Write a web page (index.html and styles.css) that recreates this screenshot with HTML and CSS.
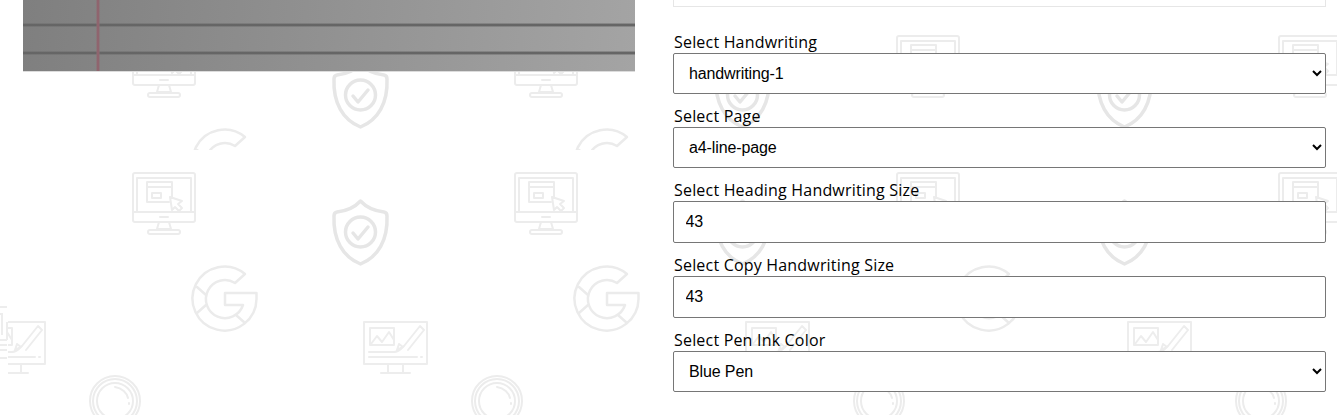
FILE: index.html
```html
<!DOCTYPE html>
<html lang="en">
<head>
  <meta charset="UTF-8">
  <meta name="viewport" content="width=device-width, initial-scale=1.0">
  <title>Handwriting Generator</title>
  <link rel="stylesheet" href="styles.css">
</head>
<body>
  <!-- icon wallpaper behind the page -->
  <svg class="bg-pattern" width="1337" height="415" aria-hidden="true">
    <defs>
      <g id="icons" fill="none" stroke-linejoin="round" stroke-linecap="round">
        <!-- monitor with cursor -->
        <g stroke="#ececec" stroke-width="2">
          <rect x="133" y="173" width="62" height="49" rx="2"/>
          <path d="M137 212V178H191V212M133 212H195M160 217H168M159 222L157 229H171L169 222"/>
          <rect x="148" y="230" width="32" height="4" rx="2"/>
          <path d="M172 198V182H147V202H169M147 187H172"/>
          <rect x="152" y="193" width="9" height="5"/>
          <path d="M170 197L182 201L178 204L182 208L179 211L175 207L172 210Z"/>
        </g>
        <!-- google G -->
        <g stroke="#ebebeb" stroke-width="2.500">
          <path d="M245 274A32 32 0 1 0 256.500 299V293H225V305H243A19 19 0 1 1 235 283Z"/>
          <path d="M197 287L206 295M197 313L206 305M236 315L245 323"/>
        </g>
        <!-- shield with check -->
        <g stroke="#e6e6e6" stroke-width="3.500">
          <path d="M360.5 201C366 207 375 211 384 212Q387 212.500 387 216C388 240 378 257 360.500 264C343 257 333 240 334 216Q334 212.500 337 212C346 211 355 207 360.500 201Z"/>
          <circle cx="360.500" cy="232" r="15"/>
          <path d="M353 233L358 239L368 227"/>
        </g>
        <!-- monitor with pen -->
        <g stroke="#ededed" stroke-width="2">
          <path d="M364 322H427V364H364ZM388 365V372M403 365V372M381 373H410"/>
          <path d="M370 328H394V345H370ZM371 344L377 336L382 342L389 332L394 340"/>
          <path d="M369 352H394C399 352 401 349 404 346L420 326L424 330L408 350M397 350L399 344L403 347Z"/>
          <path d="M369 357H417M421 357H422"/>
        </g>
        <!-- lens ring -->
        <g stroke="#ececec" stroke-width="2">
          <circle cx="115" cy="401" r="25"/>
          <circle cx="115" cy="401" r="22"/>
          <circle cx="115" cy="401" r="18"/>
          <path d="M115 387C122 388 127 393 128 398M129 403V404"/>
        </g>
      </g>
      <pattern id="tile" patternUnits="userSpaceOnUse" x="60" y="0" width="382" height="500">
        <use href="#icons" x="-60"/>
      </pattern>
      <pattern id="tile-top" patternUnits="userSpaceOnUse" x="60" y="-137" width="382" height="500">
        <use href="#icons" x="-60"/>
      </pattern>
    </defs>
    <rect x="0" y="0" width="1337" height="150" fill="url(#tile-top)"/>
    <rect x="0" y="150" width="1337" height="265" fill="url(#tile)"/>
    <rect x="0" y="0" width="8" height="415" fill="#fff"/>
    <path d="M0 307H7M0 314H2V335M7 322V340M0 340H7M0 345H7M0 350H7M0 358H7" fill="none" stroke="#ededed" stroke-width="2"/>
  </svg>

  <main class="layout">
    <section class="preview">
      <div class="paper"></div>
    </section>

    <section class="controls">
      <div class="output-box"></div>

      <form class="settings">
        <div class="field">
          <label for="handwriting">Select Handwriting</label>
          <select id="handwriting">
            <option>handwriting-1</option>
          </select>
        </div>
        <div class="field">
          <label for="page">Select Page</label>
          <select id="page">
            <option>a4-line-page</option>
          </select>
        </div>
        <div class="field">
          <label for="heading-size">Select Heading Handwriting Size</label>
          <input id="heading-size" type="text" value="43">
        </div>
        <div class="field">
          <label for="copy-size">Select Copy Handwriting Size</label>
          <input id="copy-size" type="text" value="43">
        </div>
        <div class="field">
          <label for="ink">Select Pen Ink Color</label>
          <select id="ink">
            <option>Blue Pen</option>
          </select>
        </div>
      </form>
    </section>
  </main>
</body>
</html>
```

FILE: styles.css
```css
html, body {
  height: 415px;
  overflow: hidden;
}
body {
  position: relative;
  margin: 0;
  background-color: #fff;
  font-family: "Liberation Sans", Arial, sans-serif;
}
.bg-pattern {
  position: absolute;
  top: 0;
  left: 0;
  display: block;
  filter: blur(0.5px);
}
.layout {
  position: relative;
  display: flex;
  padding-left: 23px;
}
.preview {
  width: 612px;
  margin-right: 38px;
}
.paper {
  height: 72px;
  background-color: #919191;
  background-image:
    linear-gradient(to right, transparent 73px, #8f6a72 74px, #8f5f6a 75px, #8f6a72 76px, transparent 77px),
    linear-gradient(to bottom, transparent 23px, #6c6c6c 24px, #5f5f5f 25px, #6c6c6c 26px, transparent 27px, transparent 51px, #6c6c6c 52px, #5f5f5f 53px, #6c6c6c 54px, transparent 55px),
    linear-gradient(95deg, #7f7f7f, #a4a4a4);
  border-bottom: 1px solid #dcdcdc;
  box-sizing: border-box;
}
.controls {
  width: 653px;
}
.output-box {
  height: 7px;
  box-sizing: border-box;
  background-color: #fff;
  border: 1px solid #e6e6e6;
  border-top: 0;
}
.settings {
  display: flex;
  flex-direction: column;
  gap: 9px;
  margin-top: 22px;
}
label {
  display: block;
  height: 24px;
  padding-left: 1px;
  font-family: "Open Sans", sans-serif;
  font-size: 16px;
  letter-spacing: 0.19px;
  line-height: 26px;
  color: #000;
}
select, input {
  display: block;
  width: 100%;
  box-sizing: border-box;
  font-family: "Liberation Sans", Arial, sans-serif;
  font-size: 16px;
  letter-spacing: -0.12px;
  color: #000;
  background-color: #fff;
  border: 1px solid #767676;
  border-radius: 2px;
}
select {
  height: 41px;
  padding: 0 11px;
}
input {
  height: 42px;
  padding: 0 11.5px;
}
```
